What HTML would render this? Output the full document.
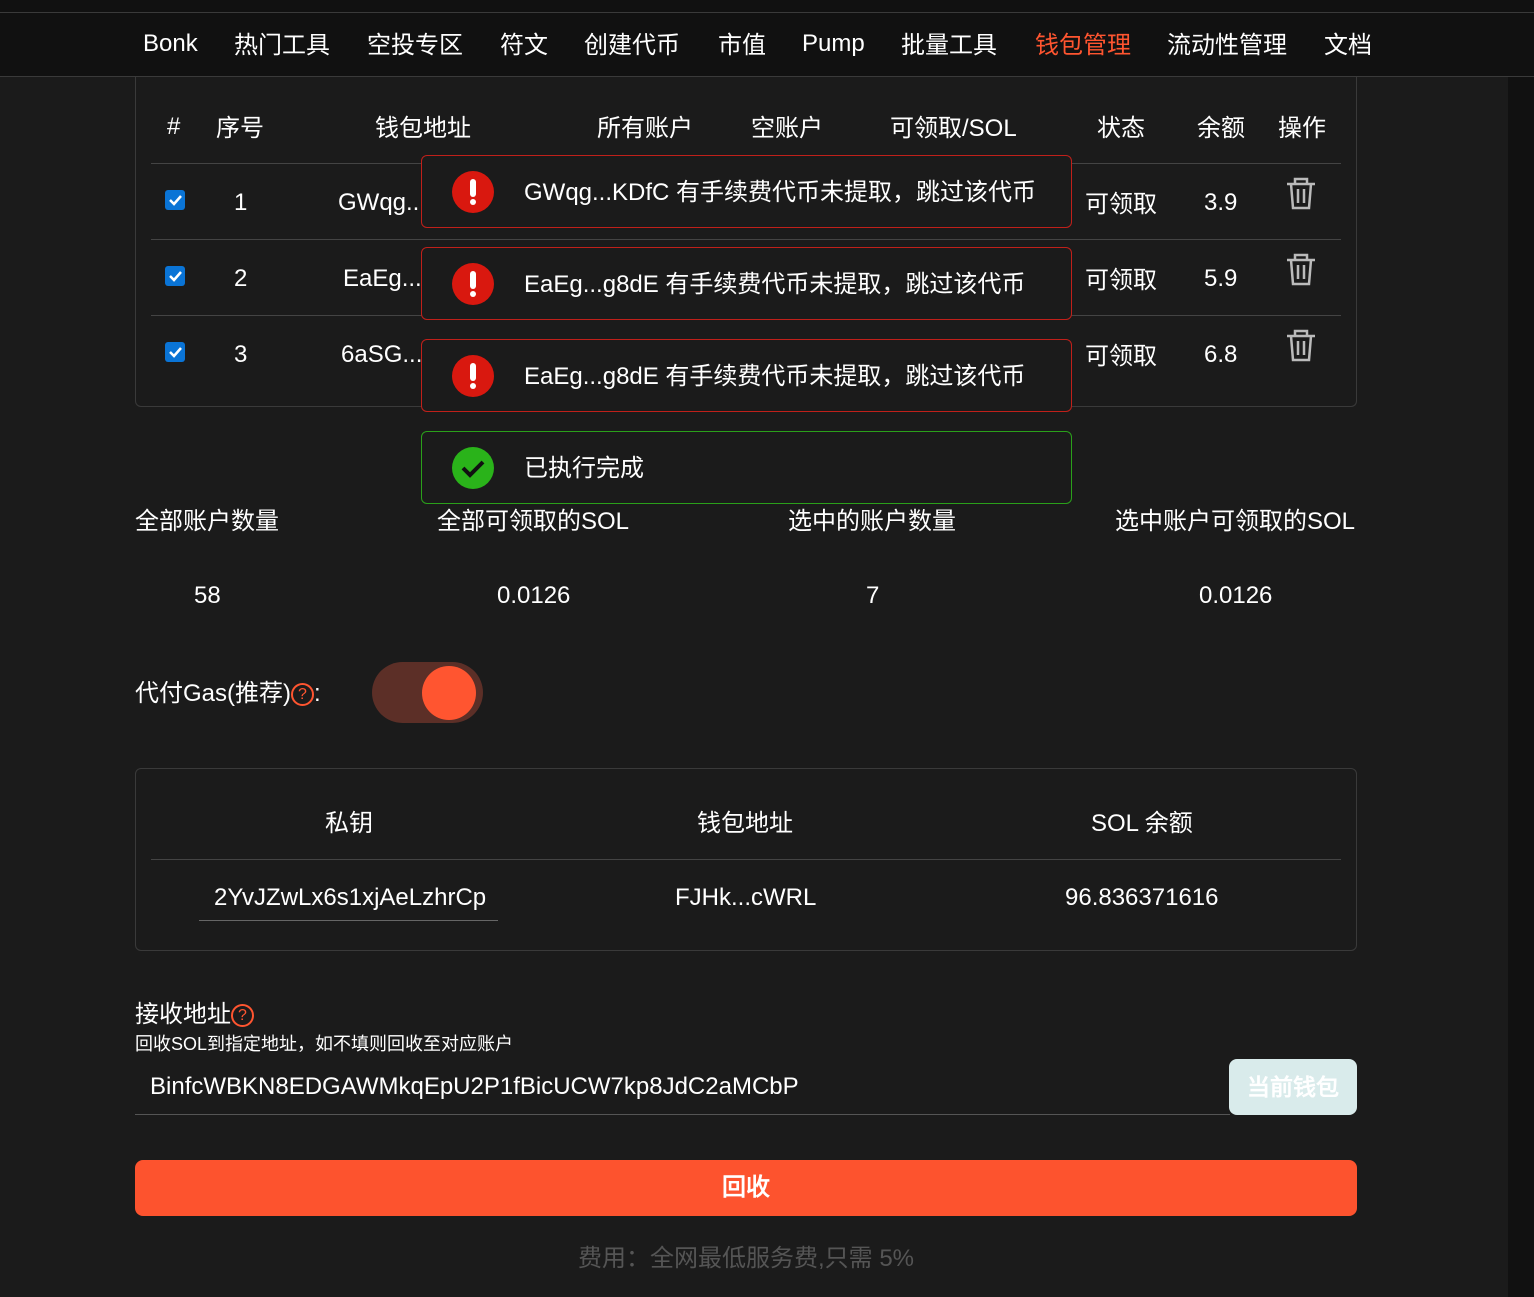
<!DOCTYPE html>
<html><head><meta charset="utf-8"><style>
*{margin:0;padding:0;box-sizing:border-box}
body{width:1534px;height:1297px;background:#1b1b1b;color:#fff;font-family:"Liberation Sans","WenQuanYi Zen Hei",sans-serif;position:relative;overflow:hidden}
.a{position:absolute;white-space:nowrap}
.c{text-align:center}
.nav{position:absolute;left:0;top:0;width:1534px;height:77px;background:#111}
.nav .ln{position:absolute;left:0;top:12px;width:1534px;height:1px;background:#3a3a3a}
.nav .lb{position:absolute;left:0;top:76px;width:1534px;height:1px;background:#3a3a3a}
.nav span{position:absolute;top:25px;font-size:24px}
.toast{position:absolute;left:421px;width:651px;height:73px;background:#1b1b1b;border:1px solid #c0201a;border-radius:6px}
.toast .ic{position:absolute;left:30px;top:15px;width:42px;height:42px;border-radius:50%;background:#d9180f}
.toast .ic:before{content:"";position:absolute;left:18px;top:8px;width:6px;height:18px;background:#fff;border-radius:3px}
.toast .ic:after{content:"";position:absolute;left:18px;top:28px;width:6px;height:6px;background:#fff;border-radius:3px}
.toast .t{position:absolute;left:102px;top:16px;font-size:24px}
.cb{position:absolute;left:165px;width:20px;height:20px;background:#0a74d6;border-radius:3px}
.f22{font-size:24px}
.q{display:inline-block;width:23px;height:23px;border:2px solid #ff5530;border-radius:50%;color:#ff5530;font-size:16px;text-align:center;line-height:19px;position:relative;top:-2px}
</style></head><body>
<div class="a" style="left:1508px;top:0;width:26px;height:1297px;background:#111"></div>
<div class="nav"><div class="ln"></div><div class="lb"></div>
<span style="left:143px;top:30px">Bonk</span><span style="left:234px">热门工具</span><span style="left:367px">空投专区</span><span style="left:500px">符文</span><span style="left:584px">创建代币</span><span style="left:718px">市值</span><span style="left:802px;top:30px">Pump</span><span style="left:901px">批量工具</span><span style="left:1035px;color:#ff5530">钱包管理</span><span style="left:1167px">流动性管理</span><span style="left:1324px">文档</span></div>

<div class="a" style="left:135px;top:76px;width:1222px;height:331px;border:1px solid #3a3a3a;border-top:0;border-radius:0 0 6px 6px"></div>
<div class="a f22" style="left:167px;top:113px">#</div>
<div class="a f22" style="left:216px;top:108px">序号</div>
<div class="a f22" style="left:375px;top:108px">钱包地址</div>
<div class="a f22" style="left:597px;top:108px">所有账户</div>
<div class="a f22" style="left:751px;top:108px">空账户</div>
<div class="a f22" style="left:890px;top:108px">可领取/SOL</div>
<div class="a f22" style="left:1097px;top:108px">状态</div>
<div class="a f22" style="left:1197px;top:108px">余额</div>
<div class="a f22" style="left:1278px;top:108px">操作</div>
<div class="a" style="left:151px;top:163px;width:1190px;height:1px;background:#444"></div>
<div class="a" style="left:151px;top:239px;width:1190px;height:1px;background:#444"></div>
<div class="a" style="left:151px;top:315px;width:1190px;height:1px;background:#444"></div>

<svg width="0" height="0" style="position:absolute"><defs><symbol id="ck" viewBox="0 0 20 20"><path d="M5 10l4 4 7-8" stroke="#fff" stroke-width="2.5" fill="none"/></symbol></defs></svg>
<div class="cb" style="top:190px"><svg width="20" height="20"><use href="#ck"/></svg></div><div class="cb" style="top:266px"><svg width="20" height="20"><use href="#ck"/></svg></div><div class="cb" style="top:342px"><svg width="20" height="20"><use href="#ck"/></svg></div>
<div class="a f22" style="left:234px;top:189px">1</div><div class="a f22" style="left:338px;top:189px">GWqg...</div><div class="a f22" style="left:1085px;top:184px">可领取</div><div class="a f22" style="left:1204px;top:189px">3.9</div>
<div class="a f22" style="left:234px;top:265px">2</div><div class="a f22" style="left:343px;top:265px">EaEg...</div><div class="a f22" style="left:1085px;top:260px">可领取</div><div class="a f22" style="left:1204px;top:265px">5.9</div>
<div class="a f22" style="left:234px;top:341px">3</div><div class="a f22" style="left:341px;top:341px">6aSG...</div><div class="a f22" style="left:1085px;top:336px">可领取</div><div class="a f22" style="left:1204px;top:341px">6.8</div>
<svg class="a" style="left:1285px;top:176px" width="32" height="35" viewBox="0 0 32 35" fill="none" stroke="#bbb" stroke-width="2.5"><path d="M2 8h28M10 8V3h12v5M6 8l2 24h16l2-24M13 13v14M19 13v14"/></svg>
<svg class="a" style="left:1285px;top:252px" width="32" height="35" viewBox="0 0 32 35" fill="none" stroke="#bbb" stroke-width="2.5"><path d="M2 8h28M10 8V3h12v5M6 8l2 24h16l2-24M13 13v14M19 13v14"/></svg>
<svg class="a" style="left:1285px;top:328px" width="32" height="35" viewBox="0 0 32 35" fill="none" stroke="#bbb" stroke-width="2.5"><path d="M2 8h28M10 8V3h12v5M6 8l2 24h16l2-24M13 13v14M19 13v14"/></svg>

<div class="toast" style="top:155px"><div class="ic"></div><div class="t">GWqg...KDfC 有手续费代币未提取，跳过该代币</div></div>
<div class="toast" style="top:247px"><div class="ic"></div><div class="t">EaEg...g8dE 有手续费代币未提取，跳过该代币</div></div>
<div class="toast" style="top:339px"><div class="ic"></div><div class="t">EaEg...g8dE 有手续费代币未提取，跳过该代币</div></div>
<div class="toast" style="top:431px;border-color:#2aa01a"><div class="a" style="left:30px;top:15px;width:42px;height:42px;border-radius:50%;background:#2ab31a"><svg width="42" height="42"><path d="M11 21l7 7 13-13" stroke="#111" stroke-width="4" fill="none"/></svg></div><div class="t">已执行完成</div></div>

<div class="a f22" style="left:135px;top:501px">全部账户数量</div>
<div class="a f22" style="left:437px;top:501px">全部可领取的SOL</div>
<div class="a f22" style="left:788px;top:501px">选中的账户数量</div>
<div class="a f22" style="left:1115px;top:501px">选中账户可领取的SOL</div>
<div class="a f22" style="left:194px;top:582px">58</div>
<div class="a f22" style="left:497px;top:582px">0.0126</div>
<div class="a f22" style="left:866px;top:582px">7</div>
<div class="a f22" style="left:1199px;top:582px">0.0126</div>

<div class="a f22" style="left:135px;top:673px">代付Gas(推荐)<span class="q">?</span>:</div>
<div class="a" style="left:372px;top:662px;width:111px;height:61px;border-radius:31px;background:#5c2f27"></div>
<div class="a" style="left:422px;top:666px;width:54px;height:54px;border-radius:50%;background:#ff5530"></div>

<div class="a" style="left:135px;top:768px;width:1222px;height:183px;border:1px solid #3a3a3a;border-radius:6px"></div>
<div class="a f22" style="left:325px;top:803px">私钥</div>
<div class="a f22" style="left:697px;top:803px">钱包地址</div>
<div class="a f22" style="left:1091px;top:803px">SOL 余额</div>
<div class="a" style="left:151px;top:859px;width:1190px;height:1px;background:#444"></div>
<div class="a f22" style="left:199px;top:884px;width:299px;height:37px;overflow:hidden;padding-left:15px;border-bottom:1px solid #666">2YvJZwLx6s1xjAeLzhrCp</div>
<div class="a f22" style="left:675px;top:884px">FJHk...cWRL</div>
<div class="a f22" style="left:1065px;top:884px">96.836371616</div>

<div class="a f22" style="left:135px;top:994px">接收地址<span class="q">?</span></div>
<div class="a" style="left:135px;top:1030px;font-size:18px">回收SOL到指定地址，如不填则回收至对应账户</div>
<div class="a f22" style="left:150px;top:1073px">BinfcWBKN8EDGAWMkqEpU2P1fBicUCW7kp8JdC2aMCbP</div>
<div class="a" style="left:135px;top:1114px;width:1095px;height:1px;background:#555"></div>
<div class="a c" style="left:1229px;top:1059px;width:128px;height:56px;border-radius:8px;background:#d9ebeb;font-size:23px;font-weight:bold;line-height:56px">当前钱包</div>
<div class="a c" style="left:135px;top:1160px;width:1222px;height:56px;border-radius:8px;background:#fd532e;font-size:24px;font-weight:bold;line-height:56px">回收</div>
<div class="a c" style="left:135px;top:1238px;width:1222px;font-size:24px;color:#555">费用：全网最低服务费,只需 5%</div>
</body></html>
